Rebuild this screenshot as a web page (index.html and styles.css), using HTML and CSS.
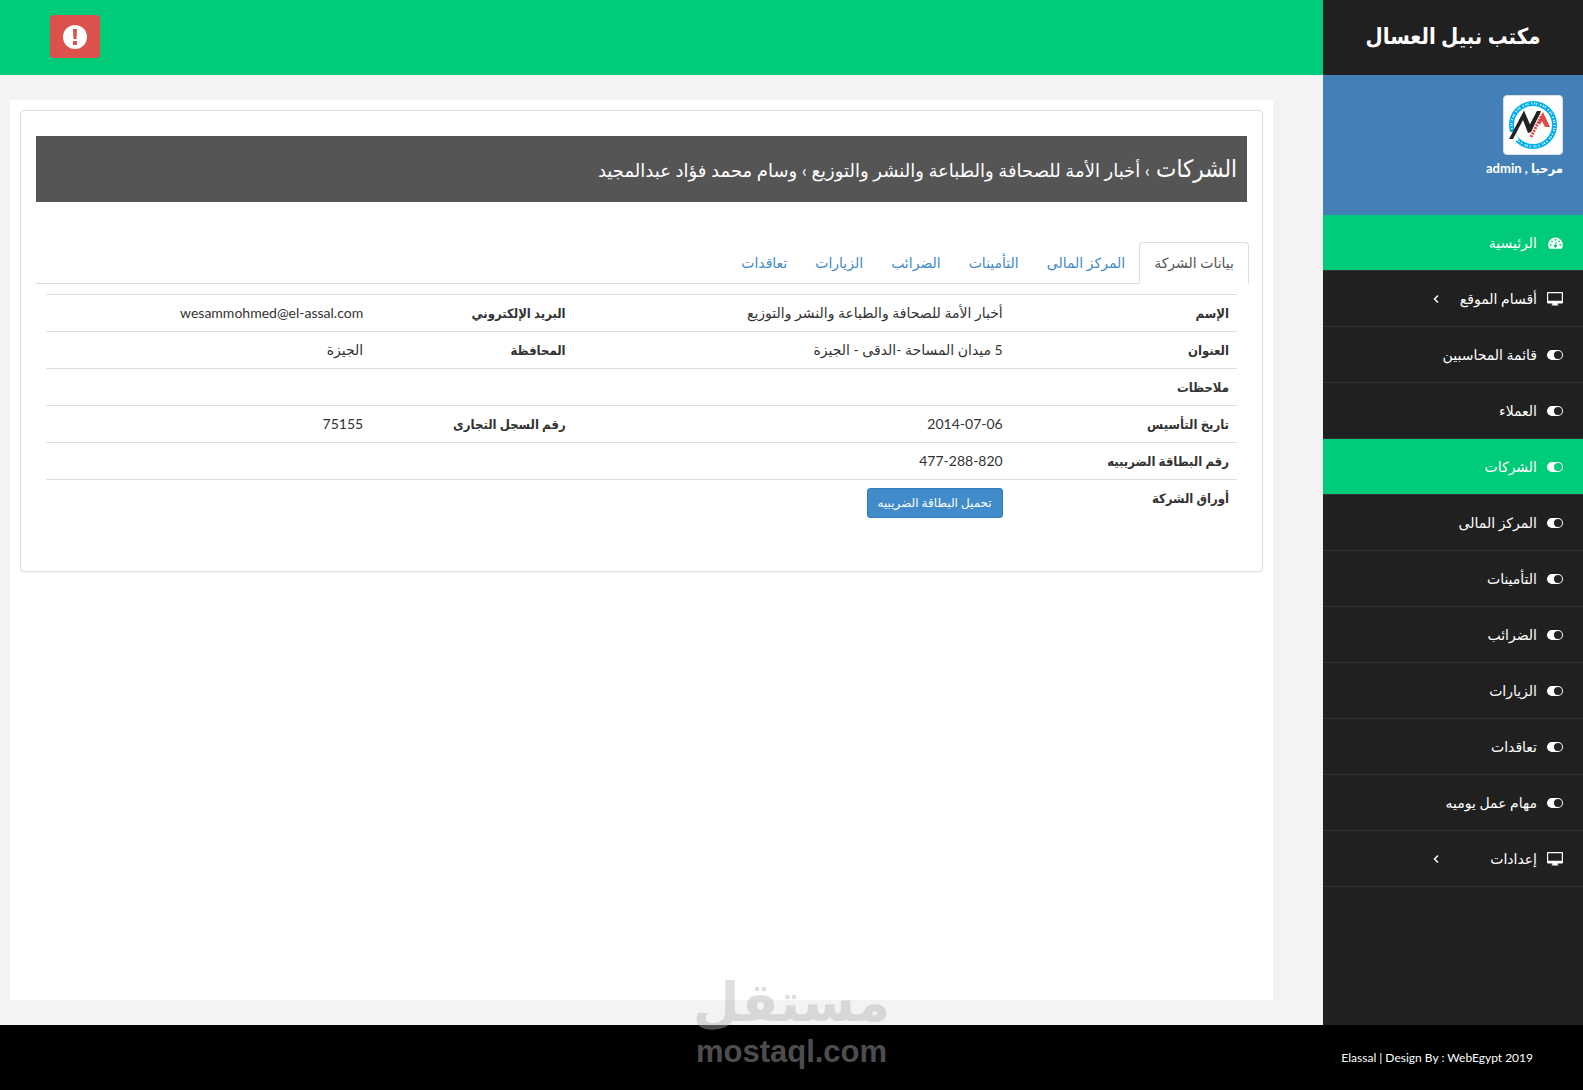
FILE: index.html
```html
<!DOCTYPE html>
<html lang="ar" dir="rtl">
<head>
    <meta charset="UTF-8">
    <meta name="viewport" content="width=device-width, initial-scale=1.0">
    <title>مكتب نبيل العسال</title>
    <link rel="stylesheet" href="styles.css">
</head>
<body>
    <!-- icons used in the menu -->
    <svg class="sprite" aria-hidden="true">
        <symbol id="icon-dashboard" viewBox="0 0 16 12">
            <path fill="currentColor" fill-rule="evenodd" d="M8 0a8 8 0 0 0-6.700 12h13.400A8 8 0 0 0 8 0zM2.800 7a1 1 0 1 1 0 2 1 1 0 0 1 0-2zM4.300 3.300a1 1 0 1 1 0 2 1 1 0 0 1 0-2zM8 1.500a1 1 0 1 1 0 2 1 1 0 0 1 0-2zM11.700 3.300a1 1 0 1 1 0 2 1 1 0 0 1 0-2zM13.200 7a1 1 0 1 1 0 2 1 1 0 0 1 0-2zM8.300 4.800l1 .2-.6 2.800a1.600 1.600 0 1 1-1-.2z"/>
        </symbol>
        <symbol id="icon-desktop" viewBox="0 0 16 14">
            <path fill="currentColor" fill-rule="evenodd" d="M1 0h14a1 1 0 0 1 1 1v9.500a1 1 0 0 1-1 1h-4.500V12.500l1 .5v.5h-7V13l1-.5V11.500H1a1 1 0 0 1-1-1V1a1 1 0 0 1 1-1zM1.200 1.200v7.500h13.600V1.200z"/>
        </symbol>
        <symbol id="icon-toggle" viewBox="0 0 16 10">
            <path fill="currentColor" fill-rule="evenodd" d="M5 0h6a5 5 0 0 1 0 10H5A5 5 0 0 1 5 0zM11 1a4 4 0 1 0 0 8 4 4 0 0 0 0-8z"/>
        </symbol>
        <symbol id="icon-angle" viewBox="0 0 6 10">
            <path fill="none" stroke="currentColor" stroke-width="1.500" d="M5 1.500 1.500 5 5 8.500"/>
        </symbol>
    </svg>

    <div class="page">
        <aside class="sidebar">
            <div class="brand">مكتب نبيل العسال</div>
            <div class="profile">
                <svg class="thumbnail" viewBox="0 0 50 50" role="img" aria-label="logo">
                    <circle cx="25" cy="25" r="21.500" fill="none" stroke="#00b0ec" stroke-width="5"/>
                    <circle cx="25" cy="25" r="21.500" fill="none" stroke="#fff" stroke-width="2" stroke-dasharray="1 2 1 1 1 3"/>
                    <path fill="#fff" d="M0 32h7l4 7-6 4-5-5z"/>
                    <path fill="#222" d="M1 39 16 10.500l6 14L29 11h4L23 32l-3 1-5-13L5 39z"/>
                    <path stroke="#222" stroke-width="4" stroke-dasharray="1 1" d="M22 28 31 12"/>
                    <path stroke="#e04a48" stroke-width="3" stroke-dasharray="2 1" d="M23 37 34 15"/>
                    <path fill="#e04a48" d="M30 22 35 12l7 15h-5l-3-6-2 4z"/>
                </svg>
                <p class="welcome">مرحبا , admin</p>
            </div>
            <ul class="menu">
                <li class="active"><a href="#"><svg class="icon icon-sm"><use href="#icon-dashboard"/></svg><span>الرئيسية</span></a></li>
                <li><a href="#"><svg class="icon"><use href="#icon-desktop"/></svg><span class="parent">أقسام الموقع</span><svg class="arrow"><use href="#icon-angle"/></svg></a></li>
                <li><a href="#"><svg class="icon"><use href="#icon-toggle"/></svg><span>قائمة المحاسبين</span></a></li>
                <li><a href="#"><svg class="icon"><use href="#icon-toggle"/></svg><span>العملاء</span></a></li>
                <li class="active"><a href="#"><svg class="icon"><use href="#icon-toggle"/></svg><span>الشركات</span></a></li>
                <li><a href="#"><svg class="icon"><use href="#icon-toggle"/></svg><span>المركز المالى</span></a></li>
                <li><a href="#"><svg class="icon"><use href="#icon-toggle"/></svg><span>التأمينات</span></a></li>
                <li><a href="#"><svg class="icon"><use href="#icon-toggle"/></svg><span>الضرائب</span></a></li>
                <li><a href="#"><svg class="icon"><use href="#icon-toggle"/></svg><span>الزيارات</span></a></li>
                <li><a href="#"><svg class="icon"><use href="#icon-toggle"/></svg><span>تعاقدات</span></a></li>
                <li><a href="#"><svg class="icon"><use href="#icon-toggle"/></svg><span>مهام عمل يوميه</span></a></li>
                <li><a href="#"><svg class="icon"><use href="#icon-desktop"/></svg><span class="parent">إعدادات</span><svg class="arrow"><use href="#icon-angle"/></svg></a></li>
            </ul>
        </aside>

        <div class="content">
            <header class="topbar">
                <button class="btn-alert" type="button" aria-label="تنبيهات">
                    <svg viewBox="0 0 24 24" width="24" height="24"><circle cx="12" cy="12" r="12" fill="#fff"/><path fill="#dd514c" d="M10 4h4l-.5 10h-3zM10 16h4v4h-4z"/></svg>
                </button>
            </header>
            <main class="main">
                <div class="panel">
                    <h1 class="page-title">الشركات <small>› أخبار الأمة للصحافة والطباعة والنشر والتوزيع › وسام محمد فؤاد عبدالمجيد</small></h1>
                    <ul class="tabs">
                        <li class="active"><a href="#">بيانات الشركة</a></li>
                        <li><a href="#">المركز المالى</a></li>
                        <li><a href="#">التأمينات</a></li>
                        <li><a href="#">الضرائب</a></li>
                        <li><a href="#">الزيارات</a></li>
                        <li><a href="#">تعاقدات</a></li>
                    </ul>
                    <div class="tab-content">
                        <table class="table">
                            <tr>
                                <th class="col-label">الإسم</th>
                                <td class="col-value">أخبار الأمة للصحافة والطباعة والنشر والتوزيع</td>
                                <th class="col-label2">البريد الإلكتروني</th>
                                <td>wesammohmed@el-assal.com</td>
                            </tr>
                            <tr>
                                <th>العنوان</th>
                                <td>5 ميدان المساحة -الدقى - الجيزة</td>
                                <th>المحافظة</th>
                                <td>الجيزة</td>
                            </tr>
                            <tr>
                                <th>ملاحظات</th>
                                <td colspan="3"></td>
                            </tr>
                            <tr>
                                <th>تاريخ التأسيس</th>
                                <td><bdi dir="ltr">2014-07-06</bdi></td>
                                <th>رقم السجل التجارى</th>
                                <td>75155</td>
                            </tr>
                            <tr>
                                <th>رقم البطاقة الضريبيه</th>
                                <td colspan="3"><bdi dir="ltr">477-288-820</bdi></td>
                            </tr>
                            <tr>
                                <th>أوراق الشركة</th>
                                <td colspan="3"><a class="btn-download" href="#">تحميل البطاقة الضريبيه</a></td>
                            </tr>
                        </table>
                    </div>
                </div>
            </main>
        </div>
    </div>

    <footer class="footer">
        <p dir="ltr">Elassal | Design By : WebEgypt 2019</p>
    </footer>

    <div class="watermark">
        <span class="watermark-ar">مستقل</span>
        <span class="watermark-en" dir="ltr">mostaql.com</span>
    </div>
</body>
</html>
```
FILE: styles.css
```css
* {
    box-sizing: border-box;
}

body {
    margin: 0;
    min-height: 100vh;
    display: flex;
    flex-direction: column;
    position: relative;
    background-color: #000;
    color: #333;
    font-family: Lato, "DejaVu Sans", sans-serif;
    font-size: 14px;
    line-height: 20px;
}

ul {
    list-style: none;
    margin: 0;
    padding: 0;
}

a {
    text-decoration: none;
}

.sprite {
    display: none;
}

.page {
    flex: 1;
    display: flex;
    background-color: #f3f3f3;
}

/* sidebar */
.sidebar {
    width: 260px;
    flex-shrink: 0;
    background-color: #202020;
    color: #fff;
}

.brand,
.welcome,
.page-title,
.table th {
    font-family: Lato, "DejaVu Sans Condensed", "DejaVu Sans", sans-serif;
}

.brand {
    height: 75px;
    line-height: 72px;
    text-align: center;
    font-size: 22px;
    font-weight: bold;
}

.profile {
    height: 140px;
    padding: 20px;
    background-color: #4480b8;
}

.thumbnail {
    display: block;
    width: 60px;
    height: 60px;
    padding: 4px;
    background-color: #fff;
    border: 1px solid #ddd;
    border-radius: 4px;
}

.welcome {
    margin: 3px 0 0;
    font-size: 13px;
    font-weight: bold;
}

.menu li {
    border-bottom: 1px solid #333;
}

.menu a {
    display: flex;
    align-items: center;
    height: 55px;
    padding: 0 20px;
    color: #fff;
}

.menu .active {
    background-color: #00cb79;
}

.icon {
    width: 16px;
    height: 14px;
    margin-left: 10px;
}

.icon-sm {
    width: 15px;
    margin-left: 11px;
}

.parent {
    width: 98px;
}

.arrow {
    width: 6px;
    height: 10px;
}

/* content */
.content {
    flex: 1;
    display: flex;
    flex-direction: column;
}

.topbar {
    height: 75px;
    padding: 15px 50px;
    background-color: #00cb79;
    direction: ltr;
}

.btn-alert {
    display: flex;
    align-items: center;
    justify-content: center;
    width: 50px;
    height: 43px;
    padding: 0;
    background-color: #dd514c;
    border: none;
    border-radius: 4px;
    cursor: pointer;
}

.main {
    flex: 1;
    margin: 25px 50px 25px 10px;
    padding: 10px;
    background-color: #fff;
}

.panel {
    padding: 25px 15px 35px;
    border: 1px solid #ddd;
    border-radius: 4px;
    box-shadow: 0 1px 1px rgba(0, 0, 0, 0.05);
}

.page-title {
    margin: 0 0 40px;
    padding: 17px 10px;
    background-color: #555;
    color: #fff;
    font-size: 24px;
    font-weight: normal;
    line-height: 30px;
}

.page-title small {
    font-family: Lato, "DejaVu Sans", sans-serif;
    font-size: 18px;
}

.tabs {
    display: flex;
    margin-right: -2px;
    border-bottom: 1px solid #ddd;
}

.tabs li {
    margin-bottom: -1px;
}

.tabs a {
    display: block;
    padding: 10px 13px;
    border: 1px solid transparent;
    border-radius: 4px 4px 0 0;
    color: #428bca;
}

.tabs .active a {
    padding: 10px 14px;
    background-color: #fff;
    border-color: #ddd;
    border-bottom-color: #fff;
    color: #555;
}

.tab-content {
    padding: 10px;
}

.table {
    width: 100%;
    table-layout: fixed;
    border-collapse: collapse;
}

.table th,
.table td {
    padding: 8px;
    border-top: 1px solid #ddd;
    text-align: right;
    vertical-align: top;
}

.table th {
    font-size: 13px;
}

.col-label {
    width: 19%;
}

.col-value {
    width: 36.7%;
}

.col-label2 {
    width: 17%;
}

.btn-download {
    display: inline-block;
    padding: 5px 10px;
    background-color: #428bca;
    border: 1px solid #357ebd;
    border-radius: 3px;
    color: #fff;
    font-size: 12px;
    line-height: 18px;
}

.footer {
    height: 65px;
    padding: 23px 50px;
    color: #fff;
    font-size: 12px;
}

.footer p {
    margin: 0;
    text-align: right;
}

/* watermark over the bottom of the page */
.watermark {
    position: absolute;
    bottom: 20px;
    left: 0;
    right: 0;
    display: flex;
    flex-direction: column;
    align-items: center;
    color: #b3b3b3;
    opacity: 0.43;
    pointer-events: none;
    font-weight: bold;
}

.watermark-ar {
    font-family: "DejaVu Sans", sans-serif;
    font-size: 54px;
    line-height: 62px;
}

.watermark-en {
    font-family: "Liberation Sans", Arial, sans-serif;
    font-size: 31px;
    line-height: 36px;
}
```
